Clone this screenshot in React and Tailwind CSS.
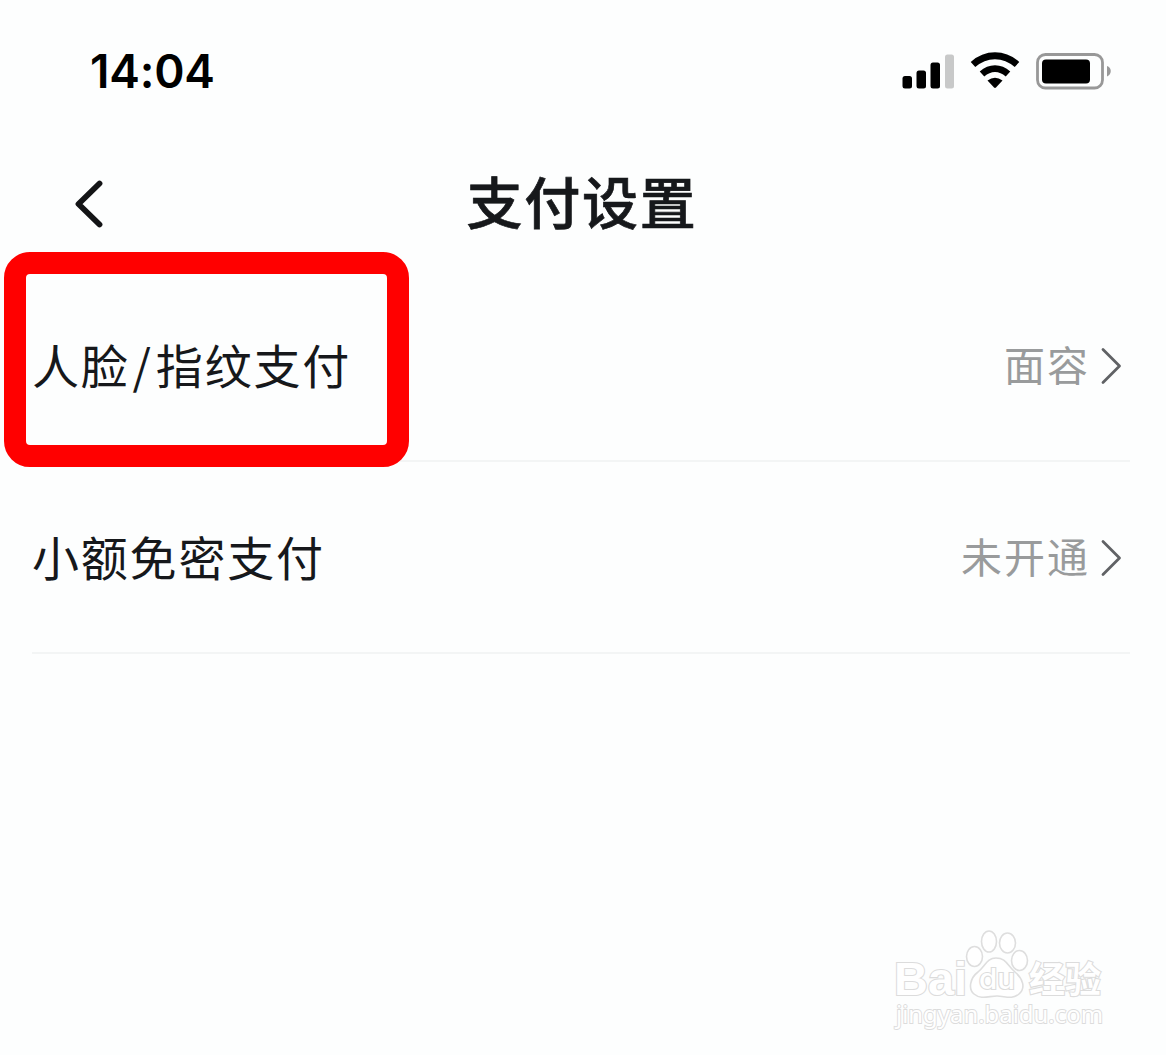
const rows = [
  { label: ['人脸', '/', '指纹支付'], value: '面容', marked: true },
  { label: ['小额免密支付'], value: '未开通' },
];

export default function App() {
  return (
    <div className="relative flex h-[1055px] w-[1166px] flex-col overflow-hidden bg-[#fdfefe] font-['Noto_Sans_CJK_SC',sans-serif] text-[#16181b]">
      <StatusBar />
      <Header />
      <main className="pl-8 pr-9">
        {rows.map((row) => (
          <Row key={row.value} {...row} />
        ))}
      </main>
      <Watermark />
    </div>
  );
}

function StatusBar() {
  return (
    <div className="flex h-[142px] items-center justify-between pl-[90px] pr-[54px]">
      <span className="font-['Inter',sans-serif] text-[46px] font-semibold leading-none tracking-[-0.2px] text-black">14:04</span>
      <svg width="212" height="40" viewBox="0 0 212 40">
        <rect x="2.5" y="25" width="9.5" height="12.5" rx="2.5" />
        <rect x="16.5" y="19.5" width="9.5" height="18" rx="2.5" />
        <rect x="30.5" y="11.5" width="9.5" height="26" rx="2.5" />
        <rect x="45" y="3.5" width="9" height="34" rx="2.5" fill="#c8c9c9" />
        <g fill="none" stroke="#000">
          <path d="M73 13.5C86 1.8 104 1.8 117 13.5" strokeWidth="6.8" />
          <path d="M82 23C90 15.8 100 15.8 108 23" strokeWidth="6.8" />
        </g>
        <path d="M87.5 29.5Q95 24 102.5 29.5L96 36.6Q95 37.5 94 36.6Z" />
        <rect x="137.5" y="3.5" width="65" height="33.5" rx="8" fill="none" stroke="#989898" strokeWidth="2.8" />
        <rect x="142" y="8.5" width="48" height="24" rx="4" />
        <path d="M207 15C212 16.5 212 23.5 207 25.5Z" fill="#999" />
      </svg>
    </div>
  );
}

function Header() {
  return (
    <header className="grid h-32 grid-cols-[1fr_auto_1fr] items-center pb-1">
      <svg className="mb-0.5 ml-[71px]" width="36" height="52" viewBox="0 0 36 52" fill="none">
        <path d="M28.5 6.5L7.5 27L28.500 47.500" stroke="#131416" strokeWidth="5.800" strokeLinecap="round" strokeLinejoin="round" />
      </svg>
      <h1 className="mb-2 mr-0.5 text-[56px] font-medium leading-none tracking-[1.800px] [-webkit-text-stroke:0.700px_#16181b]">支付设置</h1>
    </header>
  );
}

function Row({ label, value, marked }) {
  return (
    <div className="relative flex h-48 items-center justify-between border-b-2 border-[#f3f5f5]">
      <div className="mb-[3px] flex gap-[3px] text-[47px] leading-none tracking-[1.800px]">
        {label.map((part) => (
          <span key={part}>{part}</span>
        ))}
      </div>
      <div className="flex items-center">
        <span className="mb-1 text-[41px] leading-none tracking-[2px] text-[#999b9c]">{value}</span>
        <svg className="ml-1.5 mr-1.5 mt-0.5" width="28" height="40" viewBox="0 0 28 40" fill="none">
          <path d="M7 3.500L23.500 20L7 36.500" stroke="#606265" strokeWidth="2.800" strokeLinecap="round" strokeLinejoin="round" />
        </svg>
      </div>
      {marked && (
        <div className="absolute -left-7 -top-[18px] h-[215px] w-[405px] rounded-[26px] border-[22px] border-[#ff0000]" />
      )}
    </div>
  );
}

function Watermark() {
  return (
    <svg className="absolute bottom-[15px] right-[46px]" width="240" height="125" viewBox="0 0 240 125">
      <g fill="#fff" stroke="#dedede" strokeWidth="1.600">
        <ellipse cx="94.500" cy="41.500" rx="8" ry="10" />
        <ellipse cx="109" cy="26.500" rx="7.500" ry="10.500" />
        <ellipse cx="127.500" cy="28" rx="8" ry="10" />
        <ellipse cx="139.500" cy="45.500" rx="8" ry="10" />
        <path d="M116 43C107 43 106 50 98 57C90 63 88 74 94 79C101 85 109 81 117 81C125 81 132 85 139 79C146 73 143 64 135 57C127 50 126 43 116 43Z" />
      </g>
      <g fill="#fff" stroke="#dcdcdc" strokeWidth="2.200" paintOrder="stroke">
        <text x="14" y="80" fontFamily="Liberation Sans, sans-serif" fontWeight="700" fontSize="47" textLength="73" lengthAdjust="spacingAndGlyphs">Bai</text>
        <text x="99" y="74" fontFamily="Inter, sans-serif" fontWeight="500" fontSize="28" textLength="36" lengthAdjust="spacingAndGlyphs">du</text>
        <text x="149" y="78" fontFamily="Noto Sans CJK SC, sans-serif" fontWeight="700" fontSize="36" textLength="72" lengthAdjust="spacingAndGlyphs">经验</text>
        <text x="16" y="108" fontFamily="Noto Sans, sans-serif" strokeWidth="1.800" fontSize="23.500" textLength="207" lengthAdjust="spacingAndGlyphs">jingyan.baidu.com</text>
      </g>
    </svg>
  );
}
